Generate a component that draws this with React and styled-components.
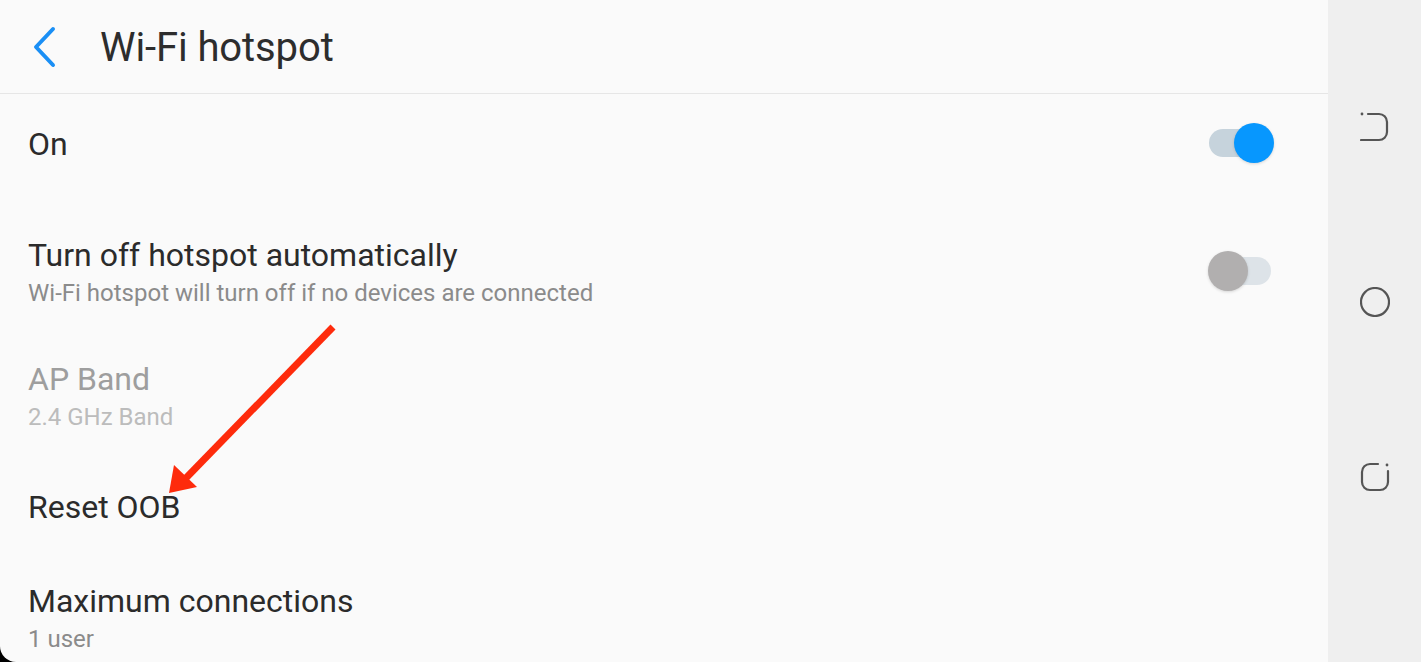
import React from 'react';
import styled, { createGlobalStyle } from 'styled-components';

const GlobalStyle = createGlobalStyle`
  html, body {
    margin: 0;
    padding: 0;
    background: #000;
  }
  body {
    font-family: Roboto, "Noto Sans", "Liberation Sans", sans-serif;
    -webkit-font-smoothing: antialiased;
  }
`;

const Screen = styled.div`
  position: relative;
  display: flex;
  width: 1421px;
  height: 662px;
  overflow: hidden;
  background: #000;
`;

const Main = styled.div`
  flex: 1;
  display: flex;
  flex-direction: column;
  background: #fafafa;
  border-bottom-left-radius: 16px;
  overflow: hidden;
`;

const Header = styled.header`
  height: 93px;
  flex-shrink: 0;
  display: flex;
  align-items: center;
  padding-left: 31px;
  border-bottom: 1px solid #e6e6e6;
  box-sizing: content-box;
`;

const BackButton = styled.button`
  display: flex;
  align-items: center;
  padding: 0;
  margin: 0 44px 0 0;
  border: 0;
  background: none;
  cursor: pointer;
`;

const Title = styled.h1`
  margin: 2px 0 0 -1px;
  font-size: 40px;
  font-weight: 400;
  color: #2d2d2d;
  letter-spacing: -0.1px;
`;

const List = styled.div`
  display: flex;
  flex-direction: column;
`;

const Row = styled.div`
  display: flex;
  align-items: center;
  justify-content: space-between;
  min-height: ${({ tall }) => (tall ? '124px' : '98px')};
  margin-top: ${({ gap }) => gap || 0}px;
  padding: 0 54px 0 28px;
  flex-shrink: 0;
`;

const RowText = styled.div`
  display: flex;
  flex-direction: column;
  padding-top: 2px;
`;

const RowTitle = styled.span`
  font-size: 32px;
  line-height: 38px;
  color: ${({ disabled }) => (disabled ? '#9e9e9e' : '#2b2b2b')};
`;

const RowSub = styled.span`
  margin-top: 4px;
  font-size: 24px;
  line-height: 30px;
  color: ${({ disabled }) => (disabled ? '#bcbcbc' : '#8b8b8b')};
`;

const Toggle = styled.div`
  position: relative;
  width: 66px;
  height: 42px;
  flex-shrink: 0;
`;

const Track = styled.div`
  position: absolute;
  left: 1px;
  top: 7px;
  width: 62px;
  height: 28px;
  border-radius: 14px;
  background: ${({ on }) => (on ? '#c6d3dc' : '#dde3e8')};
`;

const Knob = styled.div`
  position: absolute;
  top: 1px;
  ${({ on }) => (on ? 'right: 0;' : 'left: 0;')}
  width: 40px;
  height: 40px;
  border-radius: 50%;
  background: ${({ on }) => (on ? '#0797fe' : '#b1afaf')};
  box-shadow: 0 1px 3px rgba(0, 0, 0, 0.15);
`;

const NavBar = styled.nav`
  width: 93px;
  flex-shrink: 0;
  background: #efefef;
  display: flex;
  flex-direction: column;
  align-items: center;
  padding-top: 112px;
  gap: 145px;
  box-sizing: border-box;
`;

const NavKey = styled.svg`
  width: 30px;
  height: 30px;
  display: block;
`;

const Arrow = styled.svg`
  position: absolute;
  left: 0;
  top: 0;
  pointer-events: none;
`;

const Switch = ({ on }) => (
  <Toggle>
    <Track on={on ? 1 : 0} />
    <Knob on={on ? 1 : 0} />
  </Toggle>
);

const rows = [
  { title: 'On', toggle: true, on: true },
  {
    title: 'Turn off hotspot automatically',
    sub: 'Wi-Fi hotspot will turn off if no devices are connected',
    toggle: true,
    on: false,
    gap: 17,
  },
  { title: 'AP Band', sub: '2.4 GHz Band', disabled: true },
  { title: 'Reset OOB' },
  { title: 'Maximum connections', sub: '1 user' },
];

export default function App() {
  return (
    <>
      <GlobalStyle />
      <Screen>
        <Main>
          <Header>
            <BackButton aria-label="Back">
              <svg width="26" height="42" viewBox="0 0 26 42">
                <path
                  d="M22 3 L5 21 L22 39"
                  fill="none"
                  stroke="#1a8ff5"
                  strokeWidth="4"
                  strokeLinecap="round"
                  strokeLinejoin="round"
                />
              </svg>
            </BackButton>
            <Title>Wi-Fi hotspot</Title>
          </Header>
          <List>
            {rows.map((r) => (
              <Row key={r.title} tall={r.sub ? 1 : 0} gap={r.gap}>
                <RowText>
                  <RowTitle disabled={r.disabled}>{r.title}</RowTitle>
                  {r.sub && <RowSub disabled={r.disabled}>{r.sub}</RowSub>}
                </RowText>
                {r.toggle && <Switch on={r.on} />}
              </Row>
            ))}
          </List>
        </Main>
        <NavBar>
          <NavKey viewBox="0 0 30 30">
            <circle cx="2" cy="2" r="1.4" fill="#555" />
            <path
              d="M8 2 H19 A8 8 0 0 1 27 10 V20 A8 8 0 0 1 19 28 H1"
              fill="none"
              stroke="#555"
              strokeWidth="2.2"
              strokeLinecap="round"
            />
          </NavKey>
          <NavKey viewBox="0 0 30 30">
            <circle cx="15" cy="15" r="14" fill="none" stroke="#555" strokeWidth="2.2" />
          </NavKey>
          <NavKey viewBox="0 0 30 30">
            <circle cx="27" cy="3" r="1.4" fill="#555" />
            <path
              d="M18 2 H10 A8 8 0 0 0 2 10 V20 A8 8 0 0 0 10 28 H20 A8 8 0 0 0 28 20 V9"
              fill="none"
              stroke="#555"
              strokeWidth="2.2"
              strokeLinecap="round"
            />
          </NavKey>
        </NavBar>
        <Arrow width="1421" height="662" viewBox="0 0 1421 662">
          <line
            x1="333"
            y1="327"
            x2="186"
            y2="478"
            stroke="#fe2b0c"
            strokeWidth="7"
            strokeLinecap="butt"
          />
          <polygon points="169,493 174,465 197,487" fill="#fe2b0c" />
        </Arrow>
      </Screen>
    </>
  );
}
